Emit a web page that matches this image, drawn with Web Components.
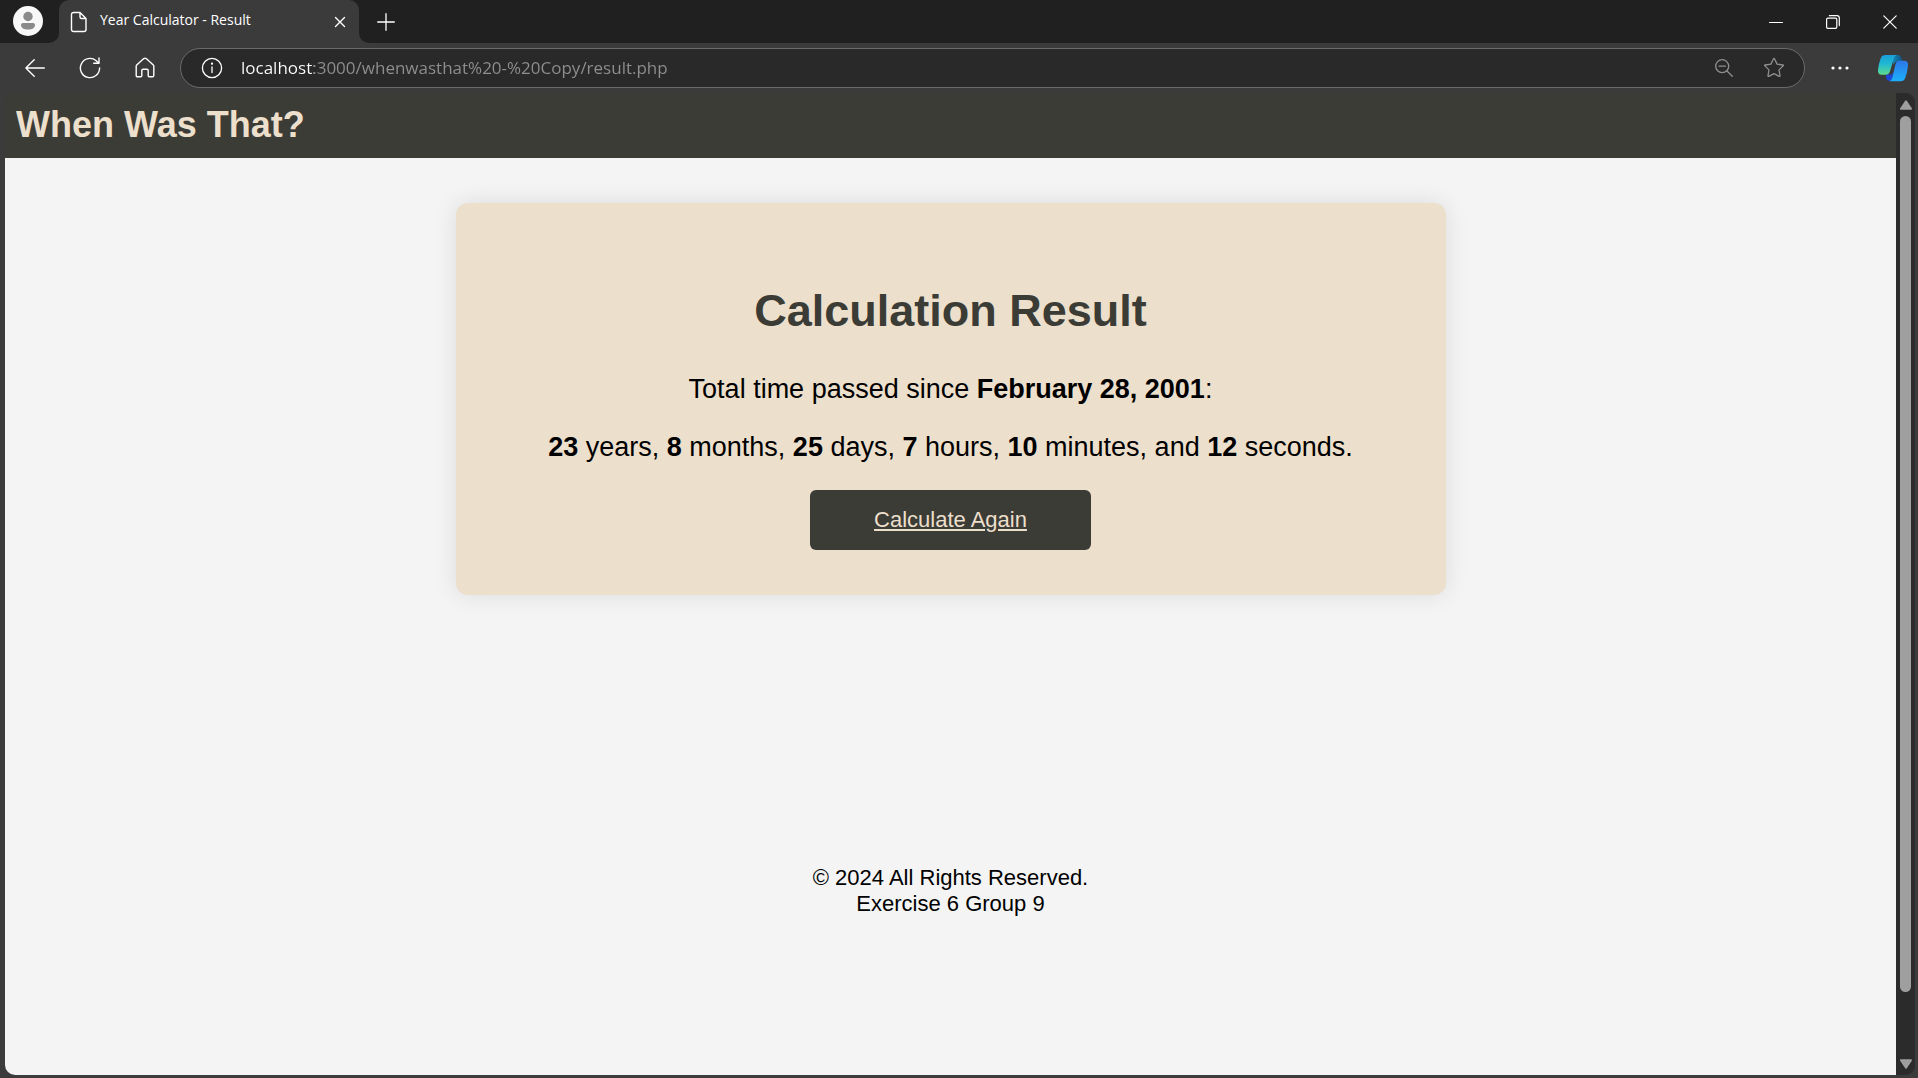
<!DOCTYPE html>
<html lang="en">
<head>
<meta charset="utf-8">
<title>Year Calculator - Result</title>
<style>
html, body { margin: 0; height: 100%; background: #3b3b3b; }
body { overflow: hidden; font-family: "Liberation Sans", Arial, sans-serif; }
</style>
</head>
<body>
<browser-window>
  <tab-strip slot="tabs">Year Calculator - Result</tab-strip>
  <address-bar slot="toolbar" url="localhost:3000/whenwasthat%20-%20Copy/result.php"></address-bar>
  <site-header>When Was That?</site-header>
  <result-card heading="Calculation Result">
    <p>Total time passed since <strong>February 28, 2001</strong>:</p>
    <p><strong>23</strong> years, <strong>8</strong> months, <strong>25</strong> days, <strong>7</strong> hours, <strong>10</strong> minutes, and <strong>12</strong> seconds.</p>
    <action-link slot="action" href="#">Calculate Again</action-link>
  </result-card>
  <site-footer>© 2024 All Rights Reserved.<br>Exercise 6 Group 9</site-footer>
  <scroll-rail slot="rail"></scroll-rail>
</browser-window>

<script>
const define = (name, html, setup) => {
  const template = document.createElement('template');
  template.innerHTML = html;
  customElements.define(name, class extends HTMLElement {
    constructor() {
      super();
      this.attachShadow({ mode: 'open' }).append(template.content.cloneNode(true));
    }
    connectedCallback() { if (setup) setup(this, this.shadowRoot); }
  });
};

const buttonReset = `
  *, *::before { box-sizing: border-box; }
  button { display: grid; place-items: center; flex: none; padding: 0; border: 0; background: none; color: inherit; }
  svg { display: block; fill: none; stroke: currentColor; stroke-linecap: round; stroke-linejoin: round; }
`;

define('browser-window', `
  <style>
    :host { display: flex; flex-direction: column; height: 100vh; background: #3b3b3b; color: #fff; }
    .view { flex: 1; min-height: 0; display: flex; margin: 0 3px 3px 5px; border-radius: 10px; overflow: hidden; background: #2b2b2b; }
    main { flex: 1; min-width: 0; overflow: hidden; background: linear-gradient(#3c3c36 20px, #f4f4f4 20px); color: #000; }
  </style>
  <slot name="tabs"></slot>
  <slot name="toolbar"></slot>
  <div class="view">
    <main><slot></slot></main>
    <slot name="rail"></slot>
  </div>`);

define('tab-strip', `
  <style>${buttonReset}
    :host { display: flex; height: 43px; flex: none; color: #fff; font: 14px/20px "Open Sans", sans-serif; }
    .profile { width: 59px; background: #202020; border-bottom-right-radius: 10px; padding: 0 3px 2px 0; display: grid; place-items: center; }
    .well { width: 300px; background: #202020; }
    .tab { height: 100%; display: flex; align-items: center; padding: 0 7px 0 11px; border-radius: 10px 10px 0 0; background: #3b3b3b; }
    .title { flex: 1; margin: 0 0 3px 12px; white-space: nowrap; }
    .close { width: 24px; height: 24px; }
    .rest { flex: 1; display: flex; align-items: center; background: #202020; border-bottom-left-radius: 10px; }
    .new { width: 54px; height: 42px; }
    .controls { display: flex; margin-left: auto; }
    .controls button { width: 57px; height: 43px; }
  </style>
  <div class="profile">
    <button aria-label="Profile"><svg width="30" height="30" viewBox="0 0 30 30" stroke="none">
      <circle cx="15" cy="15" r="15" fill="#f8f8f8" stroke="none"/>
      <circle cx="15" cy="10.5" r="4.7" fill="#8a8a8a" stroke="none"/>
      <path d="M10 17h10q2 0 2 2c0 3-3 4.600-7 4.600s-7-1.600-7-4.600q0-2 2-2z" fill="#8a8a8a" stroke="none"/>
    </svg></button>
  </div>
  <div class="well"><div class="tab">
    <svg width="18" height="22" viewBox="0 0 18 22" stroke-width="1.4"><path d="M3.500 1.500H10l6 6v11a2 2 0 0 1-2 2H3.500a2 2 0 0 1-2-2v-15a2 2 0 0 1 2-2zM10 1.500V6a1.500 1.500 0 0 0 1.500 1.500H16"/></svg>
    <span class="title"><slot></slot></span>
    <button class="close" aria-label="Close tab"><svg width="12" height="12" viewBox="0 0 12 12" stroke-width="1.400"><path d="M1.500 1.500l9 9M10.500 1.500l-9 9"/></svg></button>
  </div></div>
  <div class="rest">
    <button class="new" aria-label="New tab"><svg width="18" height="18" viewBox="0 0 18 18" stroke-width="1.300"><path d="M9 .7v16.600M.7 9h16.600"/></svg></button>
    <div class="controls">
      <button aria-label="Minimize"><svg width="14" height="14" viewBox="0 0 14 14" stroke-width="1"><path d="M.5 7.500h13"/></svg></button>
      <button aria-label="Restore"><svg width="14" height="14" viewBox="0 0 14 14" stroke-width="1.200"><rect x=".6" y="3.200" width="10.200" height="10.200" rx="1.300"/><path d="M3.400 .7h7.600a2.300 2.300 0 0 1 2.300 2.300v7.600"/></svg></button>
      <button aria-label="Close"><svg width="14" height="14" viewBox="0 0 14 14" stroke-width="1.200"><path d="M.8 .8l12.400 12.400M13.200 .8L.8 13.200"/></svg></button>
    </div>
  </div>`);

define('address-bar', `
  <style>${buttonReset}
    :host { display: flex; align-items: center; flex: none; height: 50px; color: #fff; }
    .nav { width: 55px; height: 40px; }
    .nav:first-of-type { margin-left: 7px; }
    .field { flex: 1; display: flex; align-items: center; height: 40px; margin-left: 8px; padding: 0 5px 0 11px; border: 1px solid #6b6b6b; border-radius: 20px; background: #292929; }
    .field button { width: 40px; height: 36px; }
    .field .tool { width: 50px; color: #8f8f8f; }
    input { flex: 1; min-width: 0; margin-left: 9px; padding: 0; border: 0; outline: 0; height: 30px; font: 17px/30px "Open Sans", sans-serif; color: #8f8f8f;
      background: linear-gradient(90deg, #fff 73px, #8f8f8f 73px); -webkit-background-clip: text; background-clip: text; -webkit-text-fill-color: transparent; }
    .more { width: 46px; height: 40px; margin-left: 12px; }
    .copilot { width: 34px; height: 40px; margin: 0 8px 0 13px; }
  </style>
  <button class="nav" aria-label="Back"><svg width="20" height="18" viewBox="0 0 20 18" stroke-width="1.400"><path d="M19.300 9H1M9.200 .8L.9 9l8.300 8.200"/></svg></button>
  <button class="nav" aria-label="Refresh"><svg width="22" height="22" viewBox="0 0 22 22" stroke-width="1.400"><path d="M20.600 11a9.600 9.600 0 1 1-3.400-7.300l2.100 2M20 1v5.300h-5.300"/></svg></button>
  <button class="nav" aria-label="Home"><svg width="20" height="22" viewBox="0 0 20 22" stroke-width="1.400"><path d="M1.200 9.300q0-.7.5-1.200l7.100-6.500q1.200-1 2.400 0l7.100 6.500q.5.500.5 1.200v9.200q0 1.300-1.300 1.300h-3.300q-1 0-1-1v-5.300q0-1.300-1.300-1.300H8.100q-1.300 0-1.300 1.300v5.300q0 1-1 1H2.500q-1.300 0-1.300-1.300z"/></svg></button>
  <div class="field">
    <button aria-label="Site information"><svg width="22" height="22" viewBox="0 0 22 22" stroke-width="1.300"><circle cx="11" cy="11" r="9.600"/><path d="M11 9.800v5.700"/><circle cx="11" cy="6.700" r=".5" fill="currentColor"/></svg></button>
    <input type="text" aria-label="Address" spellcheck="false">
    <button class="tool" aria-label="Zoom"><svg width="18" height="18" viewBox="0 0 18 18" stroke-width="1.300"><circle cx="7.200" cy="7.200" r="6.500"/><path d="M4 7.200h6.400M12 12l5.300 5.300"/></svg></button>
    <button class="tool" aria-label="Favorite"><svg width="22" height="22" viewBox="0 0 22 22" stroke-width="1.300"><path d="M10.400 2q.6-1 1.200 0l2.500 5.100 5.700.9q1 .2.300.9l-4.100 4 1 5.800q.1 1-.8.600L11 16.600l-5.200 2.700q-.9.400-.8-.6l1-5.800-4.100-4q-.7-.7.300-.9l5.700-.9z"/></svg></button>
  </div>
  <button class="more" aria-label="Settings and more"><svg width="18" height="4" viewBox="0 0 18 4"><g fill="#fff" stroke="none"><circle cx="2" cy="2" r="1.600"/><circle cx="9" cy="2" r="1.600"/><circle cx="16" cy="2" r="1.600"/></g></svg></button>
  <button class="copilot" aria-label="Copilot"><svg width="32" height="28" viewBox="0 0 32 28">
    <defs>
      <linearGradient id="left" x1="0" y1="0" x2="0" y2="1"><stop offset="0" stop-color="#1a9fd8"/><stop offset=".45" stop-color="#20b8d2"/><stop offset="1" stop-color="#5fdb8c"/></linearGradient>
      <linearGradient id="right" x1="0" y1="0" x2="0" y2="1"><stop offset="0" stop-color="#2d78e8"/><stop offset="1" stop-color="#1cb0fb"/></linearGradient>
      <linearGradient id="fold" x1="0" y1="0" x2="1" y2="0"><stop offset="0" stop-color="#1588bd"/><stop offset="1" stop-color="#0e5482"/></linearGradient>
    </defs>
    <g stroke="none">
      <path d="M15 1h6q2.300 0 3.200 2.500l1.600 4h-5q-3.300 0-4.400 3.500z" fill="url(#fold)"/>
      <path d="M9 20.500h5.500l2-2.500-2 9h-1.500q-3 0-4-3z" fill="#1d46d6"/>
      <path d="M8.500 1h11q-2 1-3 4.300l-3.300 11.500q-1 4-4.700 4H4.700q-4.200 0-3.700-5Q1.700 9.500 3.700 4.200 5 1 8.500 1z" fill="url(#left)"/>
      <path d="M22.500 6.800h4.800q4.200 0 3.700 5-.7 7-2.700 12-1.300 3.500-4.800 3.500H12.500q2-1 3-4.300L18.300 11q1-4.200 4.200-4.200z" fill="url(#right)"/>
    </g>
  </svg></button>`,
  (host, root) => { root.querySelector('input').value = host.getAttribute('url'); });

define('site-header', `
  <style>
    :host { display: block; background: #3c3c36; color: #ecdfcc; }
    h1 { margin: 0; padding: 11px 11px 12px; font-size: 36px; line-height: 42px; }
  </style>
  <header><h1><slot></slot></h1></header>`);

define('result-card', `
  <style>
    :host { display: block; box-sizing: border-box; width: 990px; max-width: 100%; margin: 45px auto 0; padding: 75px 45px 45px;
      border-radius: 12px; background: #ecdfcc; box-shadow: 0 0 23px rgba(0,0,0,.1); text-align: center; font-size: 27px; line-height: 31px; }
    h2 { margin: 0 0 31px; color: #3c3c36; font-size: 45px; line-height: 65px; }
    ::slotted(p) { margin: 0 0 27px; }
  </style>
  <h2></h2>
  <slot></slot>
  <slot name="action"></slot>`,
  (host, root) => { root.querySelector('h2').textContent = host.getAttribute('heading'); });

define('action-link', `
  <style>
    :host { display: block; width: 281px; margin: 0 auto; }
    a { display: block; padding: 17px 11px 18px; border-radius: 6px; background: #3c3c36; color: #ecdfcc; font-size: 22px; line-height: 25px; }
  </style>
  <a><slot></slot></a>`,
  (host, root) => { root.querySelector('a').href = host.getAttribute('href'); });

define('site-footer', `
  <style>
    :host { display: block; margin-top: 270px; text-align: center; font-size: 22px; line-height: 26px; }
  </style>
  <footer><slot></slot></footer>`);

define('scroll-rail', `
  <style>${buttonReset}
    :host { display: flex; flex-direction: column; align-items: center; width: 19px; flex: none; background: #2b2b2b; }
    button { width: 19px; height: 23px; }
    svg { fill: #9f9f9f; stroke: #9f9f9f; }
    .track { flex: 1; width: 11px; display: flex; flex-direction: column; }
    .thumb { flex: 73; border-radius: 6px; background: #9f9f9f; }
    .gap { flex: 5; }
  </style>
  <button aria-label="Scroll up"><svg width="12" height="10" viewBox="0 0 12 10" stroke-width="2"><path d="M6 1.300L1 8.800h10z"/></svg></button>
  <div class="track"><div class="thumb"></div><div class="gap"></div></div>
  <button aria-label="Scroll down"><svg width="12" height="10" viewBox="0 0 12 10" stroke-width="2"><path d="M6 8.700L1 1.200h10z"/></svg></button>`);
</script>
</body>
</html>
